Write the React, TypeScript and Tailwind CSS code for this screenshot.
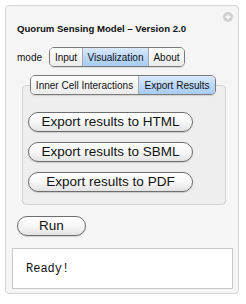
import React from "react";

// Mac-style "aqua" widgets for the Quorum Sensing panel

const font = { fontFamily: '"Lucida Grande", "Liberation Sans", Arial, sans-serif' };

const Segment = ({ label, active, last, className }: { label: string; active?: boolean; last?: boolean; className?: string }) => (
  <div
    className={
      "flex items-center justify-center shrink-0 whitespace-nowrap h-full text-[10px] text-[#111] " +
      (last ? "" : "border-r border-[#a8a8a8] ") +
      (active
        ? "bg-gradient-to-b from-[#dbeafd] via-[#bcd8fa] to-[#a9cdf6] "
        : "bg-gradient-to-b from-white to-[#ececec] ") +
      (className ?? "")
    }
  >
    {label}
  </div>
);

const PillButton = ({ label, className }: { label: string; className?: string }) => (
  <button
    className={
      "flex items-center justify-center h-[20px] rounded-full border border-[#6e6e6e] bg-gradient-to-b from-white via-[#f7f7f7] to-[#e3e3e3] shadow-[0_1px_1px_rgba(0,0,0,0.15)] text-[#111] " +
      (className ?? "")
    }
  >
    {label}
  </button>
);

export default function App() {
  return (
    <div className="w-[246px] h-[304px] bg-white p-[5px]" style={font}>
      <div className="relative w-[234px] h-[289px] rounded-[4px] border border-[#d6d6d6] bg-[#f5f5f5] flex flex-col pl-[11px] pt-[16px]">
        {/* add button */}
        <div className="absolute right-[5px] top-[6px] w-[10px] h-[10px] rounded-full bg-[#cfcfcf] flex items-center justify-center">
          <svg width="6" height="6" viewBox="0 0 6 6">
            <path d="M3 0.5v5M0.5 3h5" stroke="#fff" strokeWidth="1.4" />
          </svg>
        </div>

        <h1 className="text-[9.6px] font-bold text-[#111] leading-[13px] whitespace-nowrap">
          Quorum Sensing Model – Version 2.0
        </h1>

        {/* mode selector */}
        <div className="flex items-center mt-[12px] h-[20px]">
          <span className="text-[10px] text-[#111] w-[32px]">mode</span>
          <div className="flex h-[20px] rounded-[5px] border border-[#7a7a7a] overflow-hidden shadow-[0_1px_1px_rgba(0,0,0,0.12)]">
            <Segment label="Input" className="w-[33px]" />
            <Segment label="Visualization" active className="w-[66px]" />
            <Segment label="About" last className="w-[35px]" />
          </div>
        </div>

        {/* tab group box */}
        <div className="ml-[5px] mt-[18px] w-[204px] h-[120px] rounded-[4px] border border-[#d2d2d2] bg-[#eeeeee] flex flex-col">
          <div className="flex self-start ml-[7px] -mt-[11px] h-[20px] rounded-[5px] border border-[#7a7a7a] overflow-hidden shadow-[0_1px_1px_rgba(0,0,0,0.12)]">
            <Segment label="Inner Cell Interactions" className="w-[108px]" />
            <Segment label="Export Results" active last className="w-[76px]" />
          </div>
          <div className="flex flex-col gap-[10px] ml-[5px] mt-[17px]">
            <PillButton label="Export results to HTML" className="w-[165px] text-[13.5px]" />
            <PillButton label="Export results to SBML" className="w-[165px] text-[13.5px]" />
            <PillButton label="Export results to PDF" className="w-[165px] text-[13.5px]" />
          </div>
        </div>

        <PillButton label="Run" className="mt-[11px] w-[69px] text-[13.5px]" />

        {/* status output */}
        <div className="-ml-[5px] mt-[12px] w-[221px] h-[41px] border border-[#c9c9c9] bg-white flex items-center pl-[13px]">
          <span className="text-[12px] text-[#111]" style={{ fontFamily: '"Liberation Mono", "Courier New", monospace' }}>
            Ready!
          </span>
        </div>
      </div>
    </div>
  );
}
